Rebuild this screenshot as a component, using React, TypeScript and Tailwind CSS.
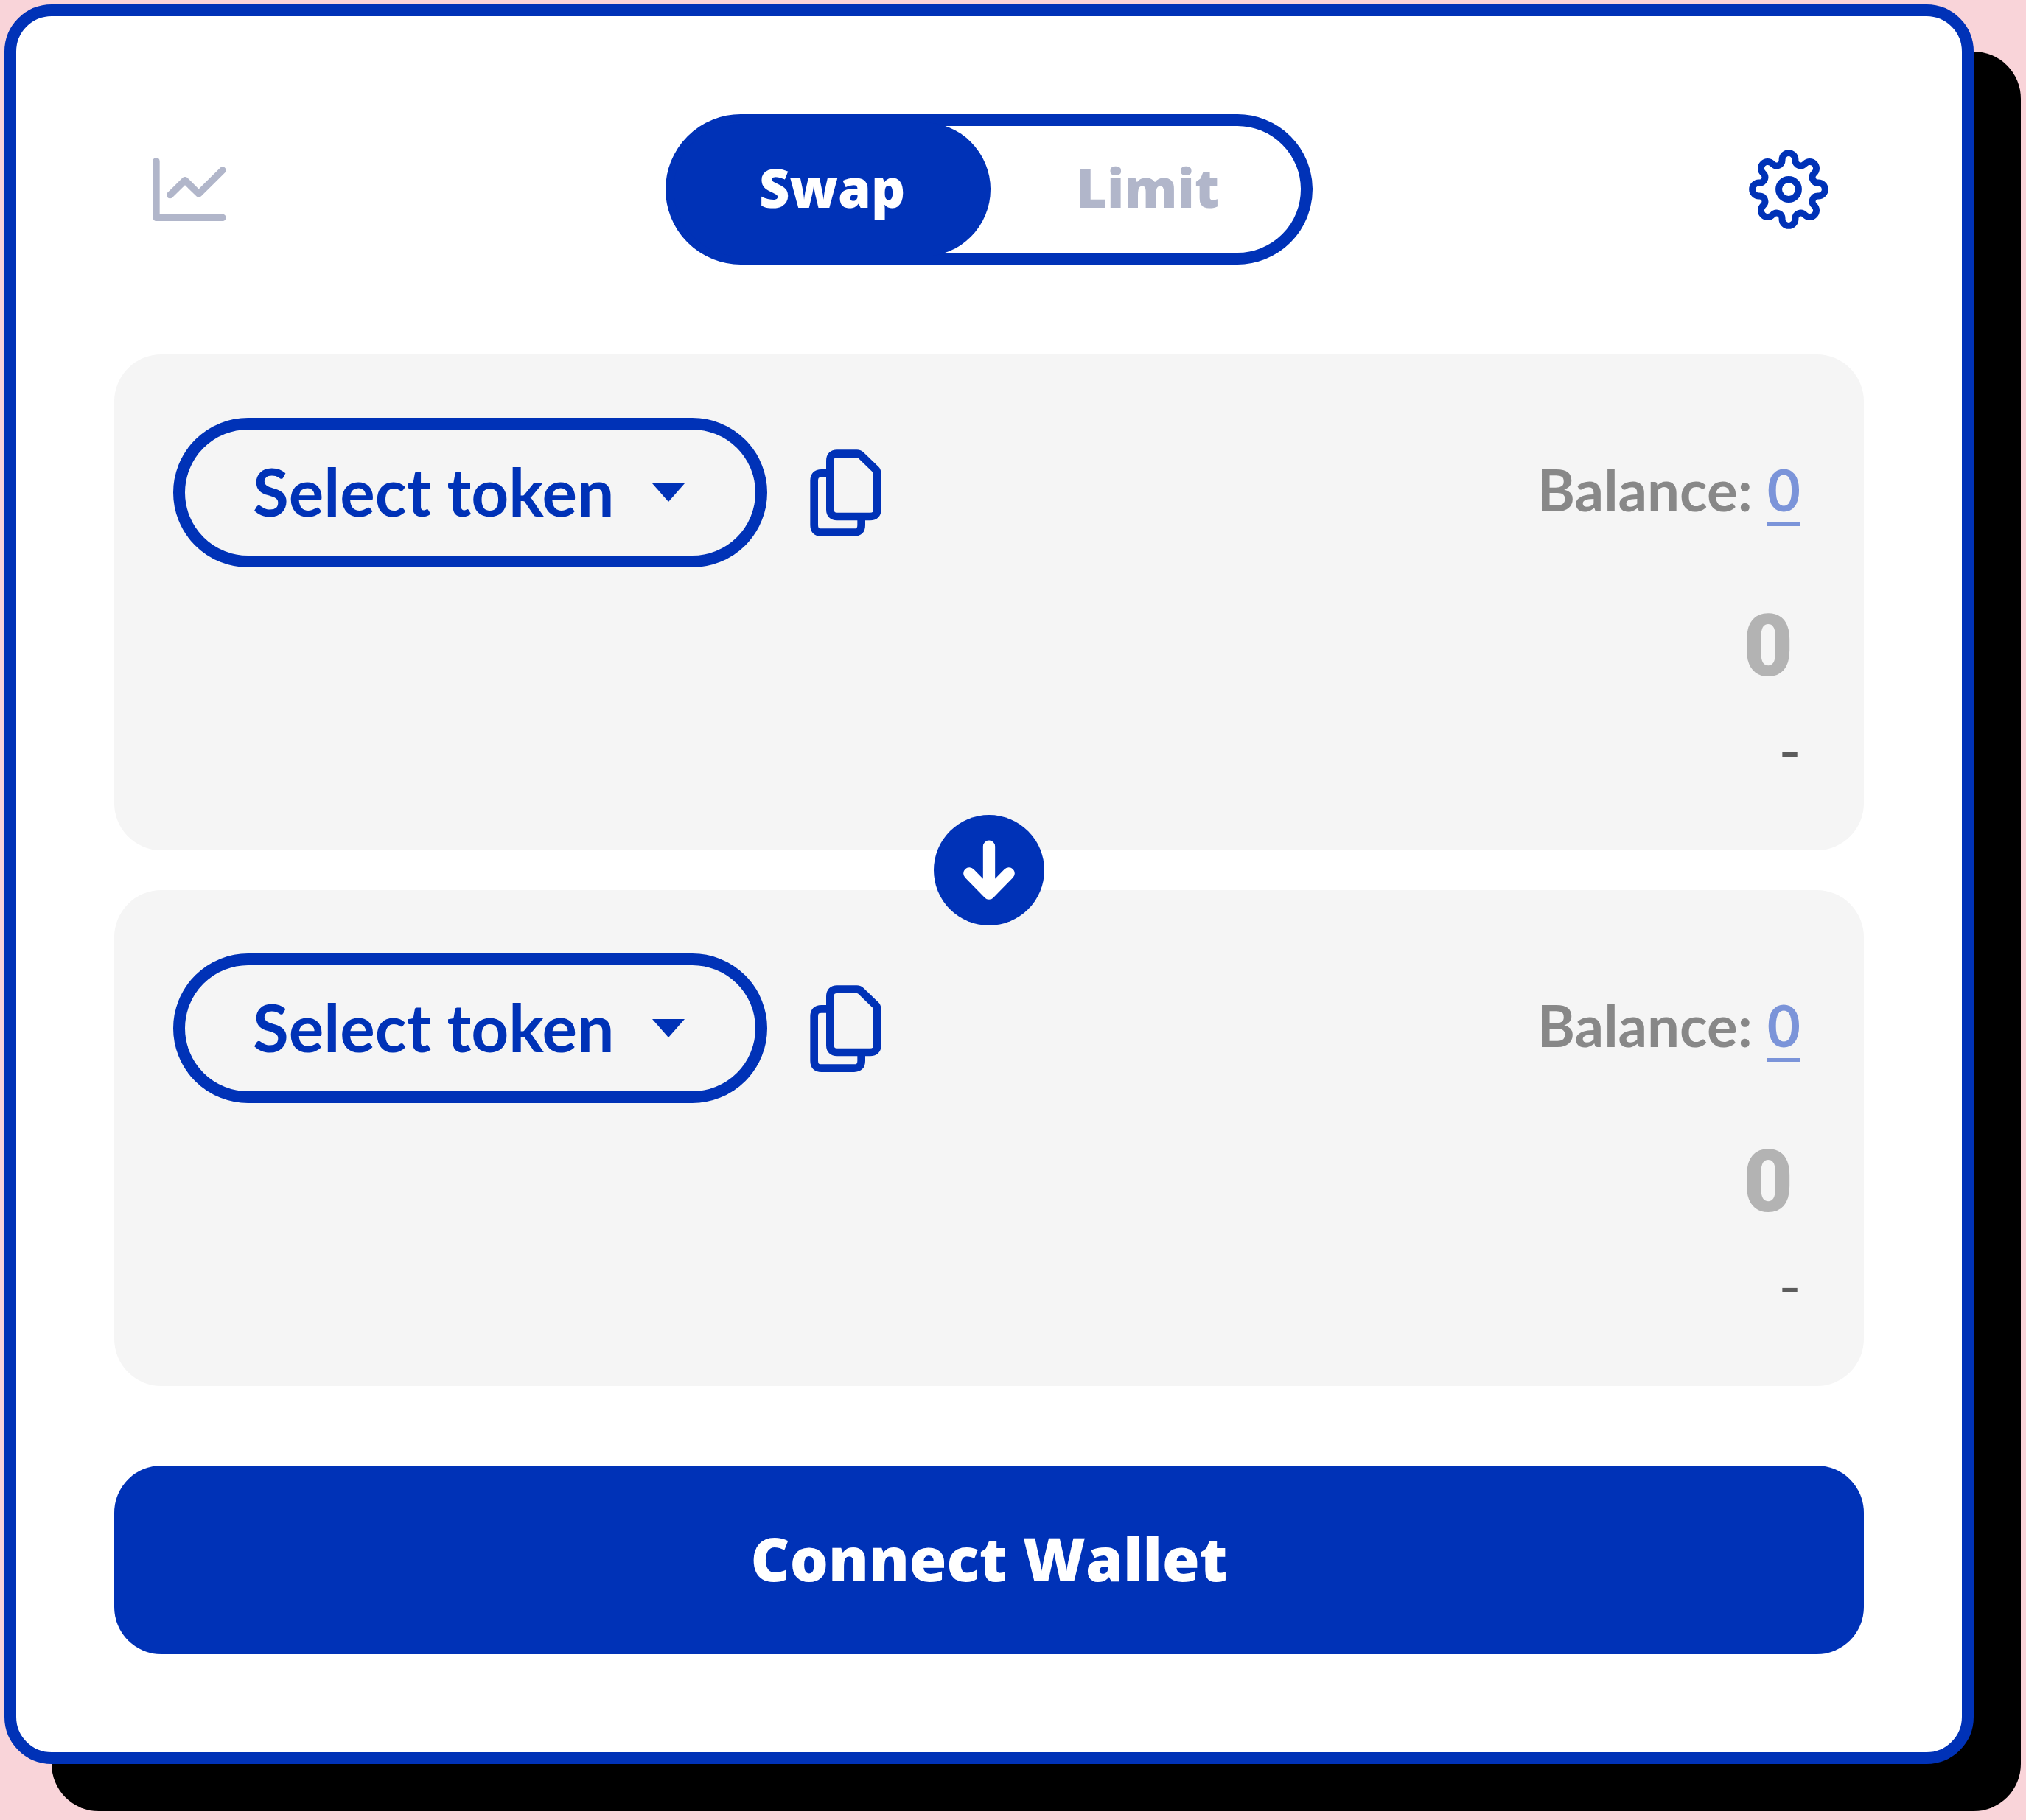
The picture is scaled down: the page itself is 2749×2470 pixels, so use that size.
import { useState } from "react";

const GEAR_PATH = (() => {
  // Eight lobes joined by smaller inward fillets, centred on the origin.
  const turn = (x: number, y: number, deg: number) => {
    const a = (deg * Math.PI) / 180;
    const rx = x * Math.cos(a) - y * Math.sin(a);
    const ry = x * Math.sin(a) + y * Math.cos(a);
    return `${rx.toFixed(1)} ${ry.toFixed(1)}`;
  };
  let d = `M${turn(-27, -122, 0)}`;
  for (let k = 0; k < 8; k++) {
    const r = k * 45;
    d += `A27 27 0 0 1 ${turn(27, -122, r)}L${turn(27, -119.5, r)}`;
    d += `A22.5 22.5 0 0 0 ${turn(65.4, -103.6, r)}L${turn(-27, -122, r + 45)}`;
  }
  return d + "Z";
})();

function ChartIcon() {
  return (
    <svg className="h-[86px] w-[100px]" viewBox="0 0 300 258" fill="none" stroke="currentColor" strokeWidth="28" strokeLinecap="round" strokeLinejoin="round" aria-hidden="true">
      <path d="M15 14V244H285" />
      <path d="M71 152L132 92L188 147L285 51" />
    </svg>
  );
}

function GearIcon() {
  return (
    <svg className="size-[108px]" viewBox="-163 -163 326 326" fill="none" stroke="currentColor" strokeWidth="27" aria-hidden="true">
      <path d={GEAR_PATH} />
      <circle r="40.5" />
    </svg>
  );
}

function CopyIcon() {
  return (
    <svg className="h-[118px] w-[97px]" viewBox="0 0 291 354" fill="none" stroke="currentColor" strokeWidth="32" strokeLinejoin="round" aria-hidden="true">
      <path d="M111 17H191Q201 17 208 24L265 79Q274 87 274 99V244Q274 273 245 273H111Q82 273 82 244V46Q82 17 111 17Z" />
      <path d="M68 97H47Q17 97 17 127V308Q17 338 47 338H180Q209 338 209 308V285" />
    </svg>
  );
}

function TokenPanel({ id, label }: { id: string; label: string }) {
  return (
    <section aria-label={label} className="rounded-[64px] bg-[#f5f5f5] pt-[86px] pr-[86px] pb-[96px] pl-[80px]">
      <div className="flex items-center justify-between">
        <div className="flex items-center gap-[58px]">
          <button type="button" className="flex h-[203px] items-center gap-[52px] rounded-full border-[16px] border-[#0032b7] pr-[96px] pl-[92px] text-[89px] leading-none font-bold">
            <span className="pb-[4px]">Select token</span>
            <svg className="h-[25px] w-[44px]" viewBox="0 0 44 25" fill="currentColor" aria-hidden="true">
              <path d="M0 0H44L22 25Z" />
            </svg>
          </button>
          <button type="button" aria-label="Copy address">
            <CopyIcon />
          </button>
        </div>
        <div className="flex items-baseline gap-[20px] pb-[4px] text-[78px] leading-[90px] font-bold text-[#888888]">
          <span>Balance:</span>
          <button type="button" className="border-b-[5px] border-[#7b94d9] text-[#7b94d9]">
            0
          </button>
        </div>
      </div>
      <input
        id={id}
        aria-label={`${label} amount`}
        placeholder="0"
        inputMode="decimal"
        className="mt-[28px] block h-[160px] w-full bg-transparent pr-[10px] text-right font-['Roboto',sans-serif] text-[117px] font-black outline-none placeholder:text-[#b3b3b3]"
      />
      <p className="mt-[14px] pr-[1px] text-right font-['Open_Sans',sans-serif] text-[84px] leading-[86px] font-medium text-[#5c5c5c]">-</p>
    </section>
  );
}

export default function App() {
  const [mode, setMode] = useState("swap");
  const on = "h-[182px] rounded-full bg-[#0032b7] px-[116px] pb-[6px] text-white";
  const off = "h-[182px] rounded-full px-[116px] pb-[6px] text-[#b1b6ca]";
  return (
    <div className="min-h-screen bg-[#f9d4d9] pt-[6px] pr-[71px] pb-[75px] pl-[6px] font-['Lato',sans-serif] text-[#0032b7]">
      <main className="rounded-[64px] border-[16px] border-[#0032b7] bg-white p-[133px] shadow-[64px_64px_0_#000]">
        <header className="mb-[122px] flex items-center justify-between">
          <button type="button" aria-label="Show chart" className="flex size-[204px] items-center justify-center text-[#b1b6ca]">
            <ChartIcon />
          </button>
          <div className="flex h-[204px] items-center rounded-full border-[16px] border-[#0032b7]">
            <div className="-mx-[5px] flex font-['Open_Sans',sans-serif] text-[72px] font-extrabold">
              <button type="button" aria-pressed={mode === "swap"} onClick={() => setMode("swap")} className={mode === "swap" ? on : off}>
                Swap
              </button>
              <button type="button" aria-pressed={mode === "limit"} onClick={() => setMode("limit")} className={mode === "limit" ? on : off}>
                Limit
              </button>
            </div>
          </div>
          <button type="button" aria-label="Settings" className="flex size-[204px] items-center justify-center">
            <GearIcon />
          </button>
        </header>
        <div className="relative flex flex-col gap-[54px]">
          <TokenPanel id="pay" label="You pay" />
          <TokenPanel id="receive" label="You receive" />
          <div className="pointer-events-none absolute inset-0 flex items-center justify-center">
            <button type="button" aria-label="Switch tokens" className="pointer-events-auto rounded-full bg-[#0032b7] text-white">
              <svg className="size-[150px]" viewBox="80 80 450 450" fill="none" stroke="currentColor" strokeWidth="49" strokeLinecap="round" strokeLinejoin="round" aria-hidden="true">
                <path d="M305 208V400M225 318L305 400L385 318" />
              </svg>
            </button>
          </div>
        </div>
        <button type="button" className="mt-[108px] h-[256px] w-full rounded-[64px] bg-[#0032b7] pb-[6px] font-['Open_Sans',sans-serif] text-[82px] font-extrabold text-white">
          Connect Wallet
        </button>
      </main>
    </div>
  );
}
